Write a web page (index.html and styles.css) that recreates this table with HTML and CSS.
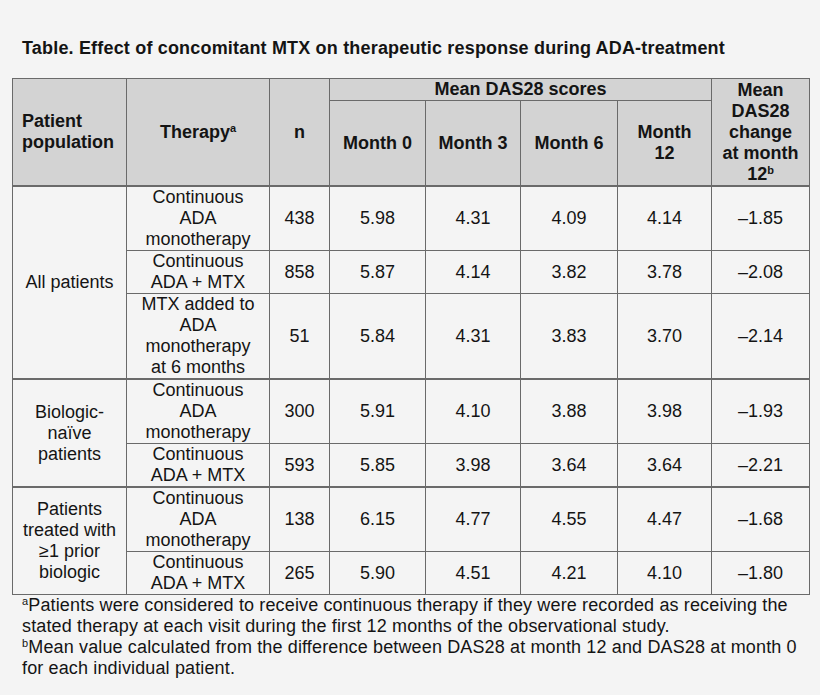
FILE: index.html
```html
<!DOCTYPE html>
<html lang="en">

<head>
  <meta charset="utf-8">
  <title>Effect of concomitant MTX</title>
  <link rel="stylesheet" href="styles.css">
</head>

<body>
  <div class="title">Table. Effect of concomitant MTX on therapeutic response during ADA-treatment</div>
  <table class="das-table">
    <colgroup>
      <col style="width:114px">
      <col style="width:143px">
      <col style="width:60px">
      <col style="width:96px">
      <col style="width:95px">
      <col style="width:97px">
      <col style="width:94px">
      <col style="width:98px">
    </colgroup>
    <thead>
      <tr>
        <th rowspan="2" class="left">Patient population</th>
        <th rowspan="2">Therapy<sup>a</sup></th>
        <th rowspan="2">n</th>
        <th colspan="4">Mean DAS28 scores</th>
        <th rowspan="2">Mean DAS28 change at month 12<sup>b</sup></th>
      </tr>
      <tr>
        <th>Month 0</th>
        <th>Month 3</th>
        <th>Month 6</th>
        <th>Month 12</th>
      </tr>
    </thead>
    <tbody>
      <tr>
        <td rowspan="3">All patients</td>
        <td class="therapy">Continuous ADA monotherapy</td>
        <td>438</td><td>5.98</td><td>4.31</td><td>4.09</td><td>4.14</td><td>&ndash;1.85</td>
      </tr>
      <tr>
        <td class="therapy">Continuous ADA + MTX</td>
        <td>858</td><td>5.87</td><td>4.14</td><td>3.82</td><td>3.78</td><td>&ndash;2.08</td>
      </tr>
      <tr>
        <td class="therapy">MTX added to ADA monotherapy at 6 months</td>
        <td>51</td><td>5.84</td><td>4.31</td><td>3.83</td><td>3.70</td><td>&ndash;2.14</td>
      </tr>
      <tr class="group">
        <td rowspan="2">Biologic-na&iuml;ve patients</td>
        <td class="therapy">Continuous ADA monotherapy</td>
        <td>300</td><td>5.91</td><td>4.10</td><td>3.88</td><td>3.98</td><td>&ndash;1.93</td>
      </tr>
      <tr>
        <td class="therapy">Continuous ADA + MTX</td>
        <td>593</td><td>5.85</td><td>3.98</td><td>3.64</td><td>3.64</td><td>&ndash;2.21</td>
      </tr>
      <tr class="group">
        <td rowspan="2">Patients treated with &ge;1 prior biologic</td>
        <td class="therapy">Continuous ADA monotherapy</td>
        <td>138</td><td>6.15</td><td>4.77</td><td>4.55</td><td>4.47</td><td>&ndash;1.68</td>
      </tr>
      <tr>
        <td class="therapy">Continuous ADA + MTX</td>
        <td>265</td><td>5.90</td><td>4.51</td><td>4.21</td><td>4.10</td><td>&ndash;1.80</td>
      </tr>
    </tbody>
  </table>
  <div class="notes">
    <p><sup>a</sup>Patients were considered to receive continuous therapy if they were recorded as receiving the stated therapy at each visit during the first 12 months of the observational study.</p>
    <p><sup>b</sup>Mean value calculated from the difference between DAS28 at month 12 and DAS28 at month 0 for each individual patient.</p>
  </div>
</body>

</html>
```

FILE: styles.css
```css
body {
  font-family: 'Liberation Sans', Arial, sans-serif;
  margin: 0;
  background-color: #f4f4f4;
  color: #141414;
  font-size: 18px;
  line-height: 21px;
}

.title {
  font-weight: bold;
  letter-spacing: 0.18px;
  padding: 38px 0 0 22px;
}

.das-table {
  margin: 19px 0 0 12px;
  width: 797px;
  table-layout: fixed;
  border-collapse: collapse;
  border: 1px solid #6a6a6a;
}

.das-table th,
.das-table td {
  border: 1px solid #6a6a6a;
  padding: 0 7px;
  text-align: center;
  vertical-align: middle;
}

.das-table th {
  background-color: #d3d3d3;
  font-weight: bold;
  padding: 0 9px;
}

.das-table td.therapy {
  padding: 0 9px;
}

.das-table th.left {
  text-align: left;
  padding-left: 9px;
}

.das-table thead tr:last-child th {
  height: 84px;
}

.das-table tbody tr:first-child td,
.das-table tr.group td {
  border-top: 2px solid #6a6a6a;
}

sup {
  font-size: 11px;
  line-height: 0;
  vertical-align: 6px;
}

.notes {
  padding: 0 0 0 22px;
  width: 782px;
  letter-spacing: 0.14px;
}

.notes p {
  margin: 0;
}
```
